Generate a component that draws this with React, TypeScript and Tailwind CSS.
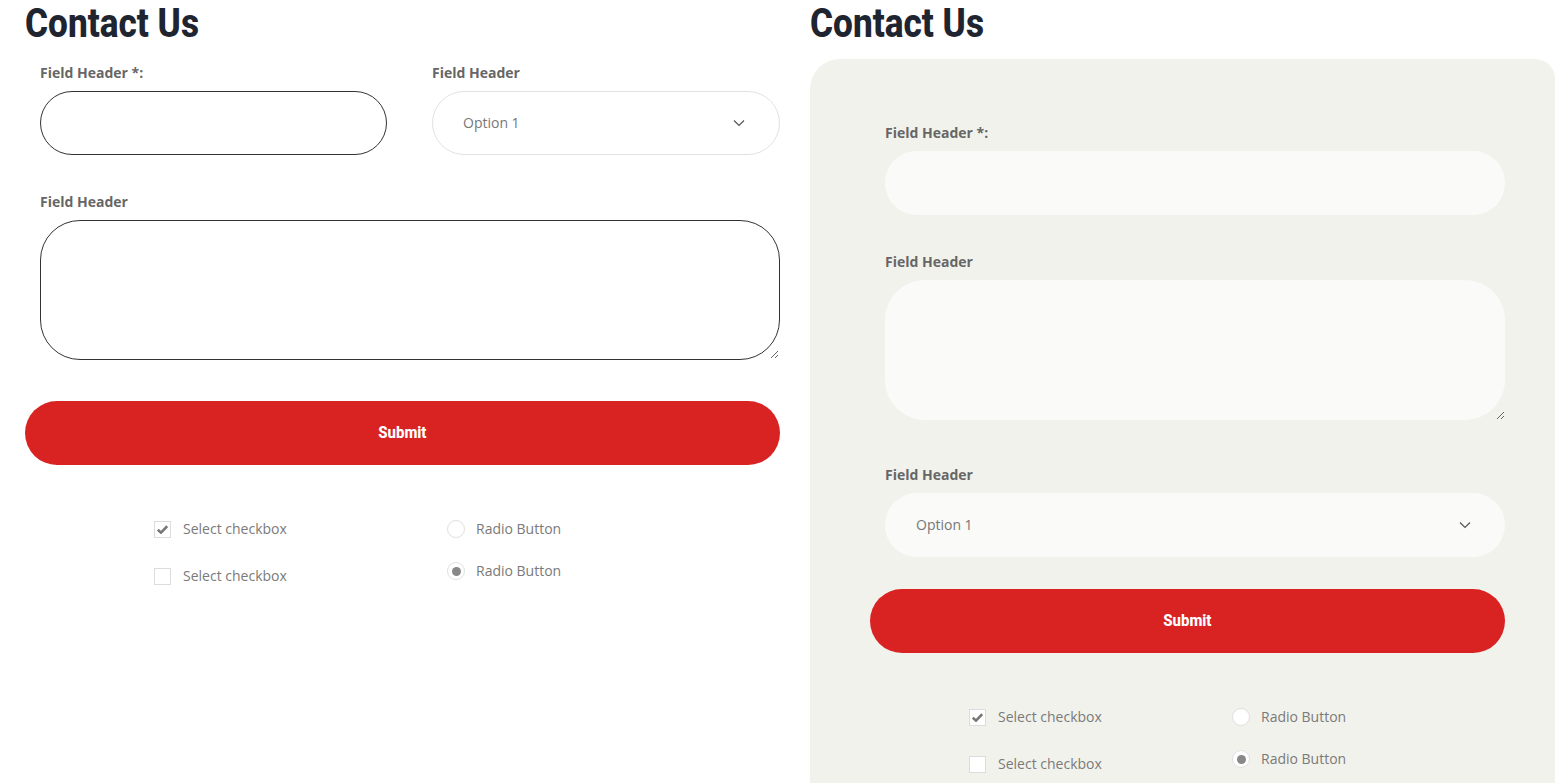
import React from "react";

const headFont = { fontFamily: '"Roboto", "Liberation Sans", sans-serif' };

function Chevron() {
  return (
    <svg width="12" height="8" viewBox="0 0 12 8" className="shrink-0">
      <path d="M1 1.5 L6 6.5 L11 1.5" fill="none" stroke="#555" strokeWidth="1.2" />
    </svg>
  );
}

function Check() {
  return (
    <svg width="11" height="9" viewBox="0 0 11 9">
      <path d="M0.8 4.6 L4 7.6 L10.2 1.2" fill="none" stroke="#777" strokeWidth="2.6" />
    </svg>
  );
}

function Checkbox({ checked }: { checked?: boolean }) {
  return (
    <div className="w-[17px] h-[17px] border border-[#dcdcdc] bg-white flex items-center justify-center shrink-0">
      {checked && <Check />}
    </div>
  );
}

function Radio({ checked }: { checked?: boolean }) {
  return (
    <div className="w-[18px] h-[18px] rounded-full border border-[#e0e0e0] bg-white flex items-center justify-center shrink-0">
      {checked && <div className="w-[9px] h-[9px] rounded-full bg-[#888]" />}
    </div>
  );
}

function Label({ children }: { children: React.ReactNode }) {
  return <div className="text-[14px] leading-[20px] font-bold text-[#666] translate-y-[1px]">{children}</div>;
}

function Heading() {
  return (
    <h1
      className="text-[40px] leading-[47px] font-extrabold text-[#1f2530] origin-left scale-x-[0.88] whitespace-nowrap"
      style={headFont}
    >
      Contact Us
    </h1>
  );
}

function SubmitButton({ className }: { className: string }) {
  return (
    <button
      className={`${className} h-[64px] w-full rounded-full bg-[#d92323] text-white text-[17px] font-extrabold flex items-center justify-center`}
      style={headFont}
    >
      <span className="inline-block scale-x-[0.88]">Submit</span>
    </button>
  );
}

function Options({ leftGap, rowGapCb, rowGapRadio }: { leftGap: string; rowGapCb: string; rowGapRadio: string }) {
  return (
    <div className="flex text-[14px] leading-[20px] text-[#7a7a7a]">
      <div className={`flex flex-col ${rowGapCb} ${leftGap}`}>
        <div className="flex items-center gap-[12px] h-[20px]">
          <Checkbox checked />
          <span>Select checkbox</span>
        </div>
        <div className="flex items-center gap-[12px] h-[20px]">
          <Checkbox />
          <span>Select checkbox</span>
        </div>
      </div>
      <div className={`flex flex-col ${rowGapRadio}`}>
        <div className="flex items-center gap-[11px] h-[20px]">
          <Radio />
          <span>Radio Button</span>
        </div>
        <div className="flex items-center gap-[11px] h-[20px]">
          <Radio checked />
          <span>Radio Button</span>
        </div>
      </div>
    </div>
  );
}

export default function App() {
  return (
    <div
      className="w-[1555px] h-[783px] overflow-hidden bg-white flex"
      style={{ fontFamily: '"Open Sans", "Noto Sans", sans-serif' }}
    >
      {/* Left column */}
      <div className="ml-[25px] w-[755px] shrink-0 flex flex-col">
        <Heading />
        <div className="mt-[15px] flex pl-[15px]">
          <div className="w-[347px] flex flex-col">
            <Label>Field Header *:</Label>
            <input className="mt-[9px] h-[64px] rounded-full border border-[#333] bg-white px-6 outline-none" />
          </div>
          <div className="ml-[45px] w-[348px] flex flex-col">
            <Label>Field Header</Label>
            <div className="mt-[9px] h-[64px] rounded-full border border-[#e2e2e2] bg-white flex items-center justify-between pl-[30px] pr-[34px] text-[14px] text-[#777]">
              <span className="-translate-y-[1px]">Option 1</span>
              <Chevron />
            </div>
          </div>
        </div>
        <div className="mt-[36px] pl-[15px] flex flex-col">
          <Label>Field Header</Label>
          <textarea className="mt-[9px] h-[140px] rounded-[40px] border border-[#333] bg-white outline-none px-6 py-4" />
        </div>
        <SubmitButton className="mt-[41px]" />
        <div className="mt-[54px] pl-[129px]">
          <Options leftGap="w-[293px]" rowGapCb="gap-[27px]" rowGapRadio="gap-[22px]" />
        </div>
      </div>

      {/* Right column */}
      <div className="ml-[30px] flex-1 flex flex-col">
        <Heading />
        <div className="mt-[12px] flex-1 bg-[#f2f2ec] rounded-tl-[30px] rounded-tr-[20px] pt-[63px] pl-[60px] pr-[50px]">
          <div className="pl-[15px] flex flex-col">
            <Label>Field Header *:</Label>
            <input className="mt-[9px] h-[64px] rounded-full bg-[#fafaf8] outline-none px-6" />
          </div>
          <div className="mt-[36px] pl-[15px] flex flex-col">
            <Label>Field Header</Label>
            <textarea className="mt-[9px] h-[140px] rounded-[40px] bg-[#fafaf8] outline-none px-6 py-4" />
          </div>
          <div className="mt-[44px] pl-[15px] flex flex-col">
            <Label>Field Header</Label>
            <div className="mt-[9px] h-[64px] rounded-full bg-[#fafaf8] flex items-center justify-between pl-[31px] pr-[34px] text-[14px] text-[#777]">
              <span className="-translate-y-[1px]">Option 1</span>
              <Chevron />
            </div>
          </div>
          <SubmitButton className="mt-[32px]" />
          <div className="mt-[54px] pl-[99px]">
            <Options leftGap="w-[263px]" rowGapCb="gap-[27px]" rowGapRadio="gap-[22px]" />
          </div>
        </div>
      </div>
    </div>
  );
}
